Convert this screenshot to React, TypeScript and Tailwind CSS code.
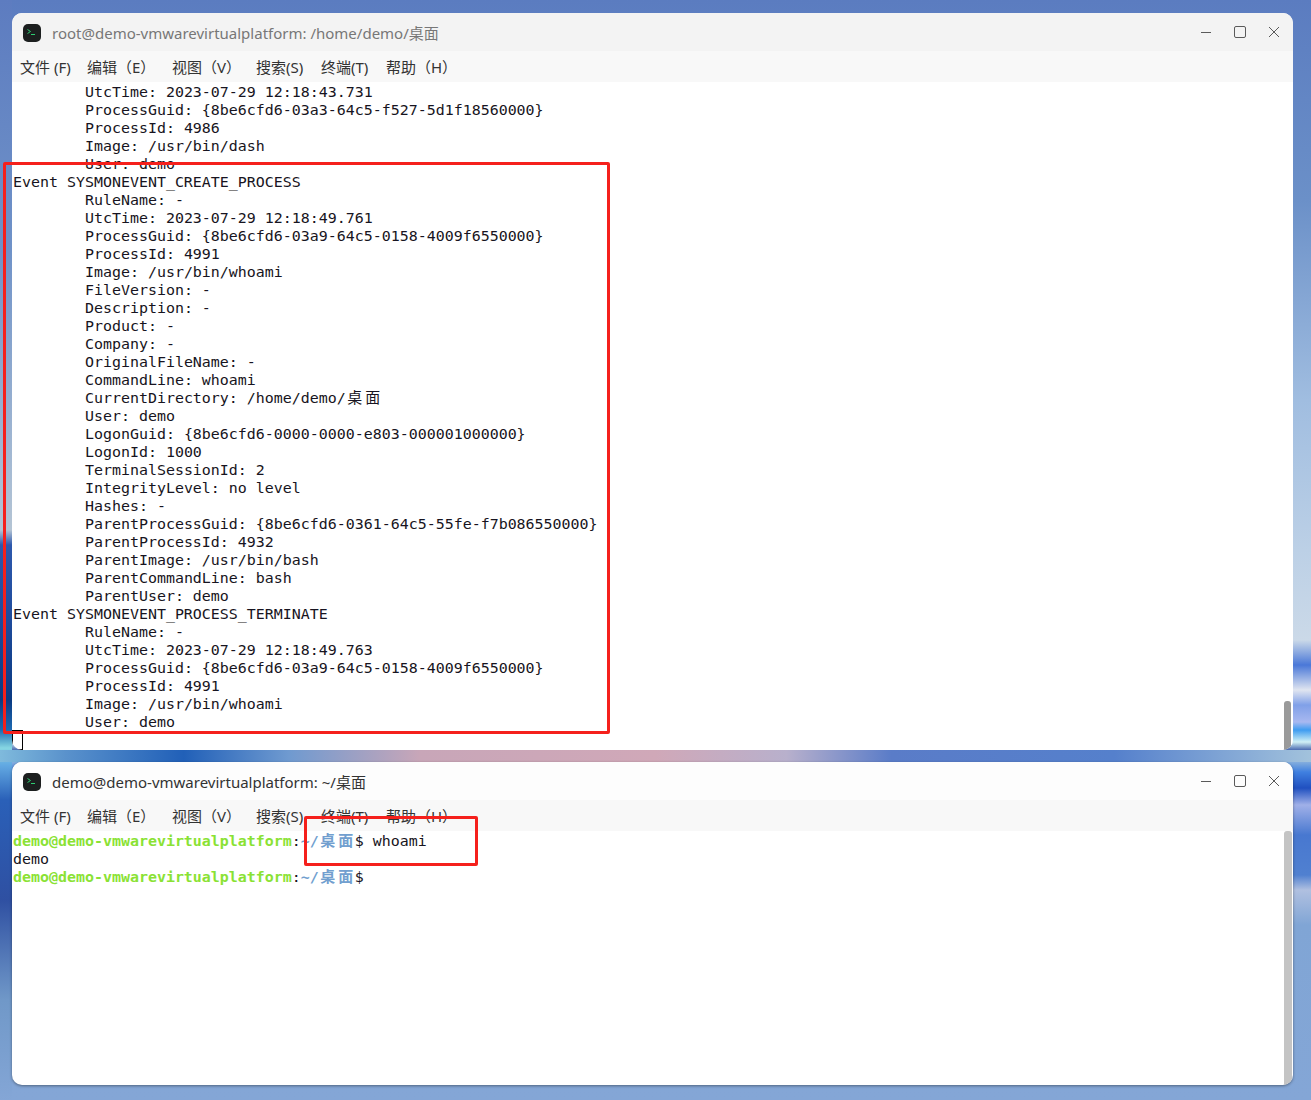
const mono = "font-['DejaVu_Sans_Mono','Noto_Sans_CJK_SC',monospace]";

const topLines = [
  "\tUtcTime: 2023-07-29 12:18:43.731",
  "\tProcessGuid: {8be6cfd6-03a3-64c5-f527-5d1f18560000}",
  "\tProcessId: 4986",
  "\tImage: /usr/bin/dash",
  "\tUser: demo",
  "Event SYSMONEVENT_CREATE_PROCESS",
  "\tRuleName: -",
  "\tUtcTime: 2023-07-29 12:18:49.761",
  "\tProcessGuid: {8be6cfd6-03a9-64c5-0158-4009f6550000}",
  "\tProcessId: 4991",
  "\tImage: /usr/bin/whoami",
  "\tFileVersion: -",
  "\tDescription: -",
  "\tProduct: -",
  "\tCompany: -",
  "\tOriginalFileName: -",
  "\tCommandLine: whoami",
  "CWD",
  "\tUser: demo",
  "\tLogonGuid: {8be6cfd6-0000-0000-e803-000001000000}",
  "\tLogonId: 1000",
  "\tTerminalSessionId: 2",
  "\tIntegrityLevel: no level",
  "\tHashes: -",
  "\tParentProcessGuid: {8be6cfd6-0361-64c5-55fe-f7b086550000}",
  "\tParentProcessId: 4932",
  "\tParentImage: /usr/bin/bash",
  "\tParentCommandLine: bash",
  "\tParentUser: demo",
  "Event SYSMONEVENT_PROCESS_TERMINATE",
  "\tRuleName: -",
  "\tUtcTime: 2023-07-29 12:18:49.763",
  "\tProcessGuid: {8be6cfd6-03a9-64c5-0158-4009f6550000}",
  "\tProcessId: 4991",
  "\tImage: /usr/bin/whoami",
  "\tUser: demo",
];

const menus = [
  { label: "文件 (F)", width: "w-[67px]" },
  { label: "编辑（E）", width: "w-[85px]" },
  { label: "视图（V）", width: "w-[84px]" },
  { label: "搜索(S)", width: "w-[65px]" },
  { label: "终端(T)", width: "w-[65px]" },
  { label: "帮助（H）", width: "w-[70px]" },
];

function Wide({ children }: { children: string }) {
  return <span className="inline-block w-[18px] text-center">{children}</span>;
}

function TerminalIcon() {
  return (
    <svg width="20" height="20" viewBox="0 0 20 20" className="mt-[2px] shrink-0">
      <rect x="1" y="1" width="18" height="18" rx="5" fill="#1c1f1f" />
      <path d="M5.5 6.5 L8.5 8.5 L5.5 10.5" fill="none" stroke="#2ecc71" strokeWidth="1" />
      <path d="M9 11.5 H13" stroke="#2ecc71" strokeWidth="1" />
    </svg>
  );
}

function WindowControls() {
  return (
    <div className="flex items-center text-[#5a5a5a]">
      <svg width="12" height="12" viewBox="0 0 12 12" className="mr-[21px]">
        <path d="M1 6.5 H11" stroke="currentColor" strokeWidth="1" />
      </svg>
      <svg width="14" height="14" viewBox="0 0 14 14" className="mr-[21px]">
        <rect x="1.5" y="1.5" width="11" height="11" rx="1.5" fill="none" stroke="currentColor" strokeWidth="1" />
      </svg>
      <svg width="12" height="12" viewBox="0 0 12 12">
        <path d="M1 1 L11 11 M11 1 L1 11" stroke="currentColor" strokeWidth="1" />
      </svg>
    </div>
  );
}

function TitleBar({ title, focused }: { title: string; focused?: boolean }) {
  return (
    <div
      className={`flex h-[38px] shrink-0 items-center pl-[10px] pr-[13px] ${
        focused ? "bg-[#fdfdfd] text-[#333333]" : "bg-[#f3f3f3] text-[#777777]"
      }`}
    >
      <TerminalIcon />
      <span className="ml-[10px] mt-[2px] flex-1 font-['Noto_Sans','Noto_Sans_CJK_SC',sans-serif] text-[15px]">
        {title}
      </span>
      <WindowControls />
    </div>
  );
}

function MenuBar() {
  return (
    <div className="flex h-[31px] shrink-0 items-center bg-[#f8f8f8] pl-[8px] pt-[2px] font-['Noto_Sans','Noto_Sans_CJK_SC',sans-serif] text-[15px] text-[#333333]">
      {menus.map((m) => (
        <span key={m.label} className={`${m.width} whitespace-pre`}>
          {m.label}
        </span>
      ))}
    </div>
  );
}

function Prompt() {
  return (
    <>
      <span className="font-bold text-[#8ae234]">demo@demo-vmwarevirtualplatform</span>:
      <span className="font-bold text-[#729fcf]">
        ~/<Wide>桌</Wide>
        <Wide>面</Wide>
      </span>
      $
    </>
  );
}

export default function App() {
  return (
    <div className="flex h-[1100px] w-[1311px] flex-col overflow-hidden pl-[12px] pr-[18px] pt-[13px] [background:linear-gradient(180deg,#5d7cc0_0px,#6f92c8_250px,#a9bdd4_480px,#b4c4d4_530px,#2d58ac_545px,#1e4b9c_620px,#0a3a82_700px,#1d6ab2_730px,#86d6e2_748px,#62a9e2_765px,#2a60b8_800px,#2f50a2_900px,#7098c8_1000px,#84a6d6_1100px)_left/12px_100%_no-repeat,linear-gradient(180deg,#5b7cc0_0px,#6b90c8_200px,#a0bde0_400px,#bcd0e6_550px,#cbd9e8_640px,#4a78d8_665px,#e0e5f0_690px,#80a0e8_705px,#a8b8f0_722px,#3f9cf0_730px,#d0f0f5_742px,#3a5aa8_751px,#a0c0dc_758px,#4080e0_772px,#2050c0_788px,#a0b0e8_805px,#4878d0_835px,#5080d0_875px,#b0c0e0_890px,#80a5d5_925px,#84a6d6_1100px)]">
      <section className="flex h-[737px] shrink-0 flex-col overflow-hidden rounded-[10px] bg-white">
        <TitleBar title="root@demo-vmwarevirtualplatform: /home/demo/桌面" />
        <MenuBar />
        <div className="flex min-h-0 flex-1">
          <div
            className={`${mono} min-w-0 flex-1 whitespace-pre pl-px pt-px text-[14.95px] leading-[18px] text-[#171421] [tab-size:8]`}
          >
            {topLines.map((line, i) => (
              <div key={i} className="h-[18px]">
                {line === "CWD" ? (
                  <>
                    {"\tCurrentDirectory: /home/demo/"}
                    <Wide>桌</Wide>
                    <Wide>面</Wide>
                  </>
                ) : (
                  line
                )}
              </div>
            ))}
            <div className="-ml-px -mt-px h-[20px] w-[11px] border border-black" />
          </div>
          <div className="mr-[2px] flex w-[7px] flex-col justify-end">
            <div className="h-[49px] rounded-t-[3px] bg-[#9a9a9a]" />
          </div>
        </div>
      </section>

      <div className="-ml-[12px] -mr-[18px] h-[12px] shrink-0 bg-[linear-gradient(90deg,#7fbadc_0%,#5a92cc_5%,#2160b8_14%,#6f9ad0_22%,#c8a6b8_32%,#d0a8b8_50%,#b8b0cc_60%,#5a7cc8_68%,#5580cc_85%,#a2c2dc_100%)]" />

      <section className="flex h-[323px] shrink-0 flex-col overflow-hidden rounded-[10px] bg-white shadow-[0_1px_3px_rgba(0,0,0,0.4)]">
        <TitleBar title="demo@demo-vmwarevirtualplatform: ~/桌面" focused />
        <MenuBar />
        <div className="flex min-h-0 flex-1">
          <div className={`${mono} min-w-0 flex-1 whitespace-pre pl-px pt-[1px] text-[14.95px] leading-[18px] text-[#171421]`}>
            <div className="h-[18px]">
              <Prompt /> whoami
            </div>
            <div className="h-[18px]">demo</div>
            <div className="h-[18px]">
              <Prompt />
            </div>
          </div>
          <div className="mr-px w-[8px] rounded-t-[3px] bg-[#c4c4c4]" />
        </div>
      </section>

      {/* red annotation boxes drawn over the screenshot */}
      <div className="absolute left-[3px] top-[162px] h-[572px] w-[607px] rounded-[2px] border-[3px] border-[#f5201c]" />
      <div className="absolute left-[304px] top-[816px] h-[50px] w-[174px] rounded-[2px] border-[3px] border-[#f5201c]" />
    </div>
  );
}
